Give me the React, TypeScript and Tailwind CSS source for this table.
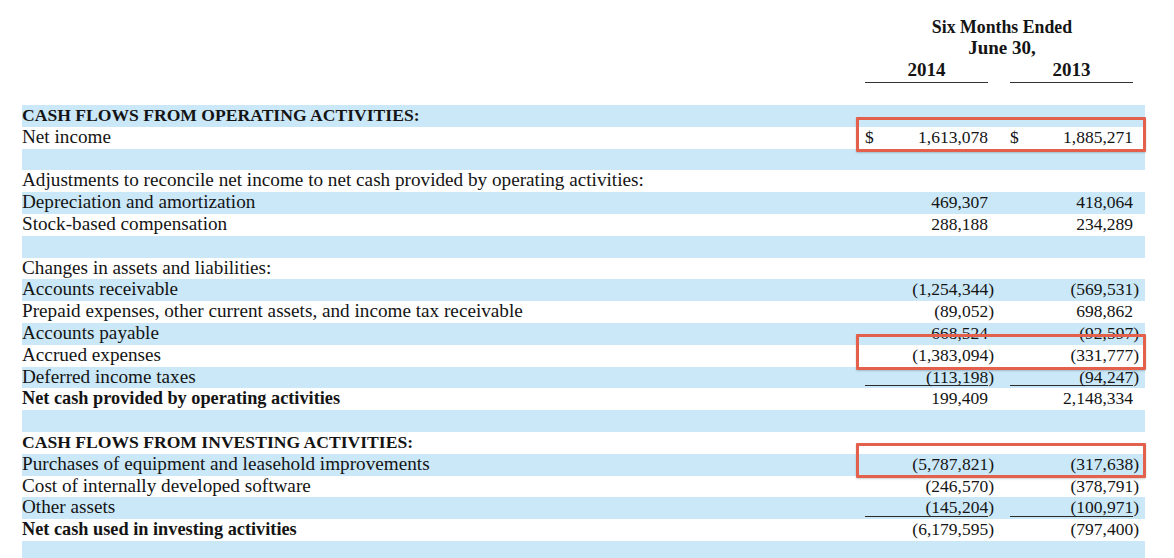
import React from "react";

type Row = {
  label?: string;
  bold?: boolean;
  caps?: boolean;
  a?: string;
  b?: string;
  dollar?: boolean;
  underline?: boolean;
};

const rows: Row[] = [
  { label: "CASH FLOWS FROM OPERATING ACTIVITIES:", bold: true, caps: true },
  { label: "Net income", a: "1,613,078", b: "1,885,271", dollar: true },
  {},
  { label: "Adjustments to reconcile net income to net cash provided by operating activities:" },
  { label: "Depreciation and amortization", a: "469,307", b: "418,064" },
  { label: "Stock-based compensation", a: "288,188", b: "234,289" },
  {},
  { label: "Changes in assets and liabilities:" },
  { label: "Accounts receivable", a: "(1,254,344)", b: "(569,531)" },
  { label: "Prepaid expenses, other current assets, and income tax receivable", a: "(89,052)", b: "698,862" },
  { label: "Accounts payable", a: "668,524", b: "(92,597)" },
  { label: "Accrued expenses", a: "(1,383,094)", b: "(331,777)" },
  { label: "Deferred income taxes", a: "(113,198)", b: "(94,247)", underline: true },
  { label: "Net cash provided by operating activities", bold: true, a: "199,409", b: "2,148,334" },
  {},
  { label: "CASH FLOWS FROM INVESTING ACTIVITIES:", bold: true, caps: true },
  { label: "Purchases of equipment and leasehold improvements", a: "(5,787,821)", b: "(317,638)" },
  { label: "Cost of internally developed software", a: "(246,570)", b: "(378,791)" },
  { label: "Other assets", a: "(145,204)", b: "(100,971)", underline: true },
  { label: "Net cash used in investing activities", bold: true, a: "(6,179,595)", b: "(797,400)" },
  {},
];

function Num({ v }: { v?: string }) {
  if (!v) return null;
  if (v.endsWith(")")) {
    return (
      <span>
        {v.slice(0, -1)}
        <span className="mr-[-6px]">)</span>
      </span>
    );
  }
  return <span>{v}</span>;
}

function Cell({ v, dollar, underline }: { v?: string; dollar?: boolean; underline?: boolean }) {
  return (
    <div className="w-[129px] pr-[6px] shrink-0">
      <div
        className={
          "h-[19.5px] leading-[20px] flex justify-between text-[17.5px] " +
          (underline ? "border-b border-[#2a2a2a]" : "")
        }
      >
        <span>{dollar ? "$" : ""}</span>
        <Num v={v} />
      </div>
    </div>
  );
}

function labelClass(r: Row) {
  if (r.bold && r.caps) return "font-bold text-[17.6px]";
  if (r.bold) return "font-bold text-[18.3px]";
  return "text-[19.2px]";
}

export default function App() {
  return (
    <div
      className="relative w-[1174px] h-[558px] overflow-hidden bg-white text-[#141414]"
      style={{ fontFamily: '"Liberation Serif", "Times New Roman", serif' }}
    >
      {/* Header */}
      <div className="flex pl-[22px] pr-[35px] pt-[17px] h-[105px]">
        <div className="flex-1" />
        <div className="w-[274px] flex flex-col items-center font-bold leading-[20.5px]">
          <div className="w-full text-center text-[17.8px]">Six Months Ended</div>
          <div className="w-full text-center text-[19px]">June 30,</div>
          <div className="flex w-full gap-[22px] mt-[2px] text-[19px]">
            <div className="w-[123px]">
              <div className="text-center border-b-[1.5px] border-[#333] pb-[1px]">2014</div>
            </div>
            <div className="w-[123px]">
              <div className="text-center border-b-[1.5px] border-[#333] pb-[1px]">2013</div>
            </div>
          </div>
        </div>
      </div>

      {/* Rows */}
      <div className="ml-[22px] w-[1123px] flex flex-col">
        {rows.map((r, i) => (
          <div
            key={i}
            className={
              "flex h-[21.8px] shrink-0 pr-[6px] " + (i % 2 === 0 ? "bg-[#cbe8f8]" : "bg-white")
            }
          >
            <div className={"flex-1 h-[19.5px] leading-[20px] whitespace-nowrap " + labelClass(r)}>
              {r.label}
            </div>
            {r.label !== undefined && (r.a || r.b) ? (
              <>
                <Cell v={r.a} dollar={r.dollar} underline={r.underline} />
                <div className="w-[16px] shrink-0" />
                <Cell v={r.b} dollar={r.dollar} underline={r.underline} />
              </>
            ) : null}
          </div>
        ))}
      </div>

      {/* Red highlight boxes */}
      <div className="absolute left-[856px] top-[117px] w-[290px] h-[35px] border-[3px] border-[#e2604c] rounded-[1px] shadow-[0_1px_2px_rgba(0,0,0,0.2)]" />
      <div className="absolute left-[856px] top-[334px] w-[290px] h-[36px] border-[3px] border-[#e2604c] rounded-[1px] shadow-[0_1px_2px_rgba(0,0,0,0.2)]" />
      <div className="absolute left-[856px] top-[443px] w-[290px] h-[35px] border-[3px] border-[#e2604c] rounded-[1px] shadow-[0_1px_2px_rgba(0,0,0,0.2)]" />
    </div>
  );
}
